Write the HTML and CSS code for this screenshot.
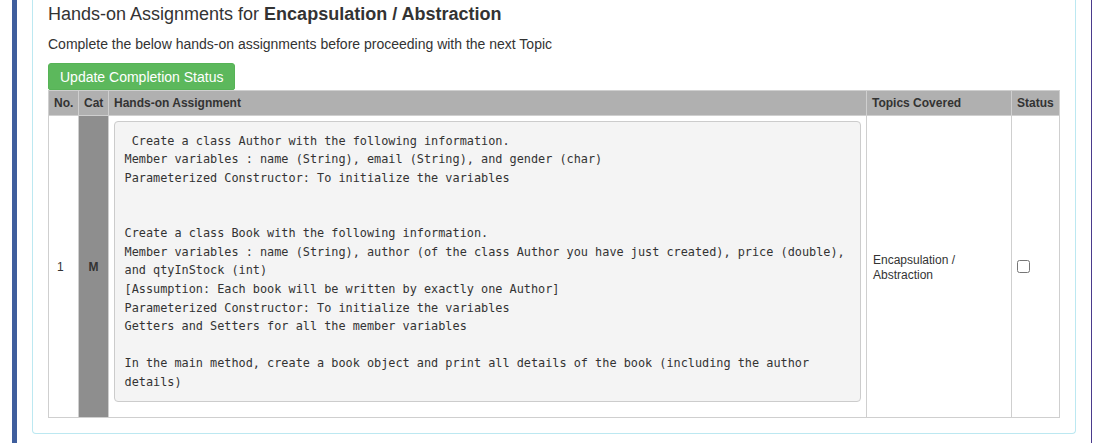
FILE: index.html
```html
<!DOCTYPE html>
<html>
<head>
<meta charset="utf-8">
<link rel="stylesheet" href="styles.css">
</head>
<body>
<div class="page">
  <div class="sidebar-bar"></div>
  <div class="panel">
    <h4 class="title">Hands-on Assignments for <b>Encapsulation / Abstraction</b></h4>
    <p class="subtitle">Complete the below hands-on assignments before proceeding with the next Topic</p>
    <button class="btn-update">Update Completion Status</button>
    <table class="assign">
      <colgroup>
        <col class="c-no"><col class="c-cat"><col class="c-task"><col class="c-topic"><col class="c-status">
      </colgroup>
      <thead>
        <tr><th>No.</th><th>Cat</th><th>Hands-on Assignment</th><th>Topics Covered</th><th>Status</th></tr>
      </thead>
      <tbody>
        <tr>
          <td class="no">1</td>
          <td class="cat">M</td>
          <td class="task"><pre class="code"> Create a class Author with the following information.
Member variables : name (String), email (String), and gender (char)
Parameterized Constructor: To initialize the variables


Create a class Book with the following information.
Member variables : name (String), author (of the class Author you have just created), price (double), and qtyInStock (int)
[Assumption: Each book will be written by exactly one Author]
Parameterized Constructor: To initialize the variables
Getters and Setters for all the member variables

In the main method, create a book object and print all details of the book (including the author details)</pre></td>
          <td class="topic">Encapsulation /<br>Abstraction</td>
          <td class="status"><input type="checkbox" class="chk"></td>
        </tr>
      </tbody>
    </table>
  </div>
  <div class="right-line"></div>
</div>
</body>
</html>
```

FILE: styles.css
```css
html, body {
  margin: 0;
  padding: 0;
  background: #fff;
}
body {
  font-family: "Liberation Sans", Arial, sans-serif;
  color: #333;
  font-size: 14px;
}
.page {
  display: flex;
  align-items: stretch;
  height: 443px;
  overflow: hidden;
  padding-left: 12px;
}
.sidebar-bar {
  width: 5px;
  background: #3f5e9d;
  flex: none;
}
.panel {
  margin-left: 15px;
  width: 1011px;
  flex: none;
  border: 1px solid #bce8f1;
  border-top: none;
  border-radius: 0 0 4px 4px;
  padding: 0 16px 15px 15px;
  align-self: flex-start;
}
.title {
  margin: 0;
  padding-top: 4px;
  font-size: 18px;
  font-weight: normal;
  line-height: 20px;
  color: #333;
}
.title b {
  font-weight: bold;
}
.subtitle {
  margin: 10px 0 0 0;
  font-size: 14px;
  line-height: 20px;
}
.btn-update {
  display: block;
  margin-top: 9px;
  background: #5cb85c;
  color: #fff;
  border: 1px solid #56b356;
  border-radius: 3px 3px 2px 2px;
  font-family: "Liberation Sans", Arial, sans-serif;
  font-size: 14px;
  line-height: 20px;
  padding: 2px 11px;
  height: 27px;
}
.assign {
  border-collapse: collapse;
  width: 1011px;
  table-layout: fixed;
  font-size: 12px;
  line-height: 15px;
}
.c-no { width: 30px; }
.c-cat { width: 30px; }
.c-task { width: 758px; }
.c-topic { width: 145px; }
.c-status { width: 48px; }
.assign th {
  background: #b0b0b0;
  color: #333;
  font-weight: bold;
  text-align: left;
  padding: 5px 5px 4px 5px;
  border: 1px solid #cfcfcf;
  white-space: nowrap;
}
.assign td {
  border: 1px solid #cfcfcf;
  padding: 5px;
  vertical-align: middle;
}
.assign td.no {
  padding-left: 8px;
  padding-top: 7px;
}
.assign td.cat {
  background: #8e8e8e;
  font-weight: bold;
  text-align: center;
  color: #333;
  padding-top: 7px;
}
.assign td.task {
  padding-bottom: 5px;
}
.code {
  margin: 0 0 10px 0;
  padding: 9.5px;
  background: #f4f4f4;
  border: 1px solid #ccc;
  border-radius: 4px;
  font-family: "DejaVu Sans Mono", monospace;
  font-size: 11.85px;
  line-height: 18.57px;
  color: #333;
  white-space: pre-wrap;
  word-wrap: break-word;
}
.assign td.topic {
  padding-left: 6px;
  padding-top: 9px;
}
.chk {
  margin: 5px 0 0 0;
  width: 13px;
  height: 13px;
}
.right-line {
  margin-left: 15px;
  width: 1px;
  background: #4a3b8c;
  flex: none;
}
```
